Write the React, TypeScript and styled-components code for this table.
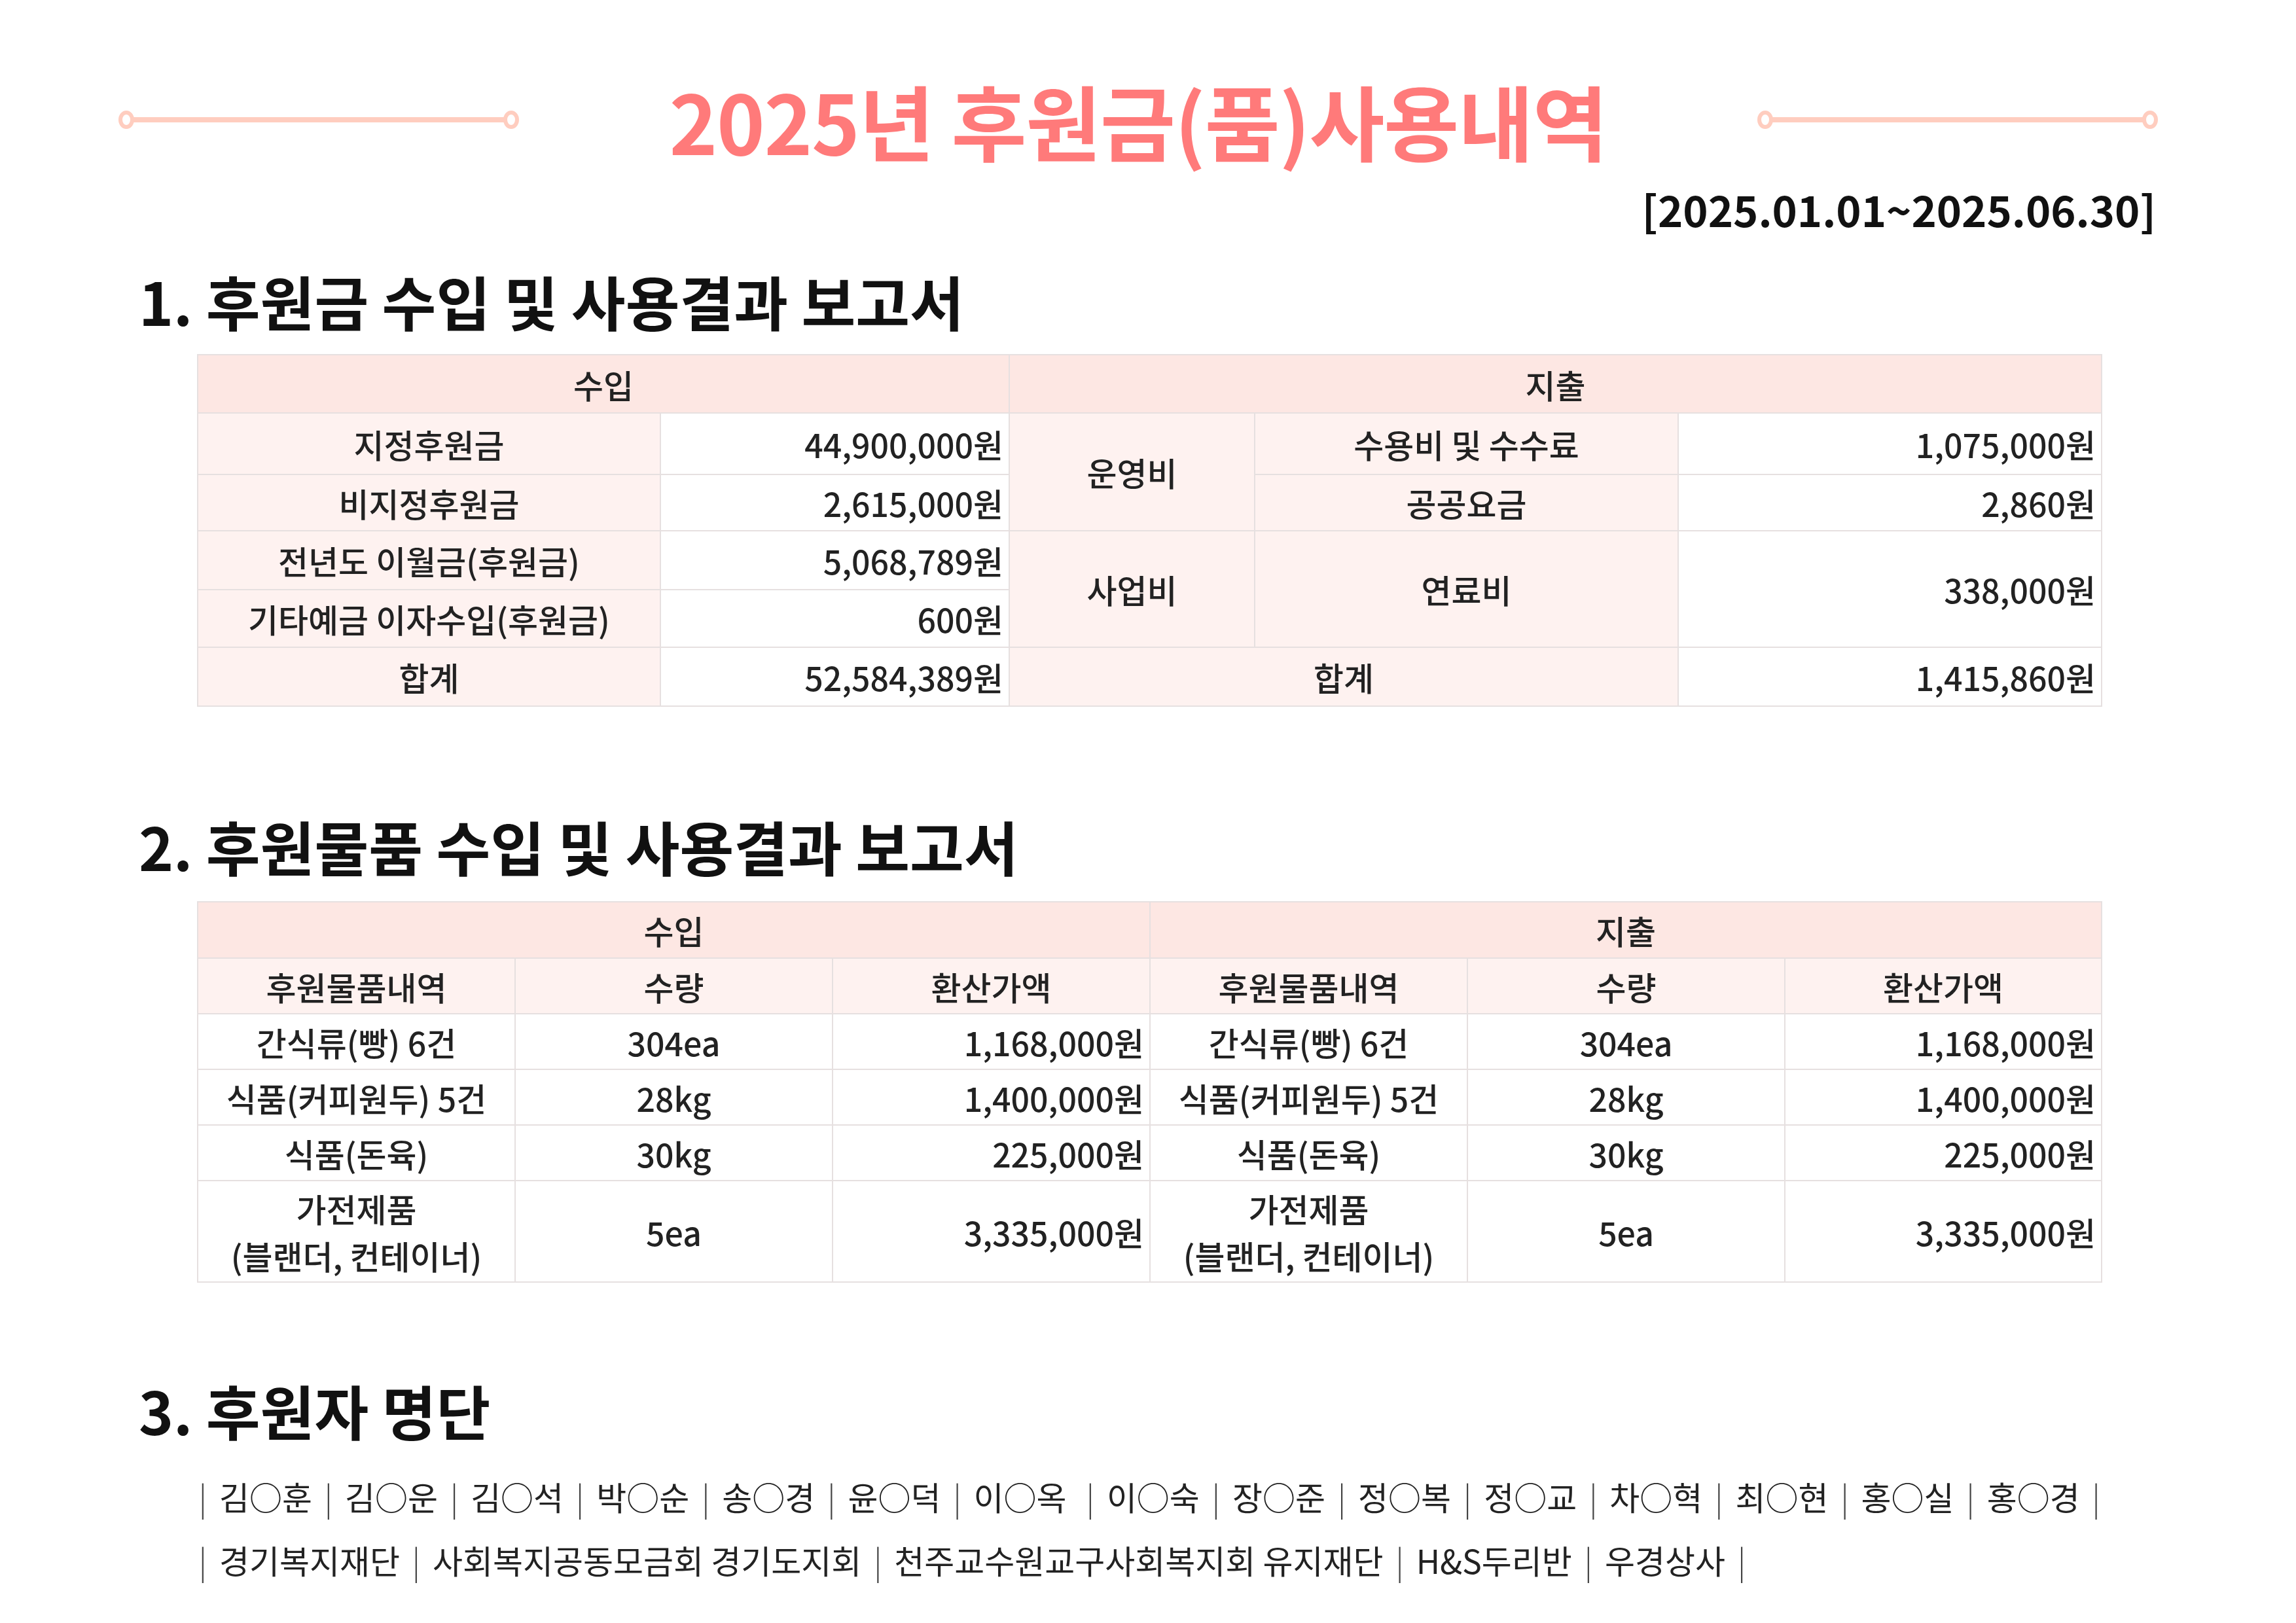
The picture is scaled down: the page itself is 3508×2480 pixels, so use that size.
import React from 'react';
import styled, { createGlobalStyle } from 'styled-components';

const GlobalStyle = createGlobalStyle`
  html, body {
    margin: 0;
    padding: 0;
    background: #ffffff;
  }
  body {
    font-family: "Noto Sans CJK KR", "Noto Sans", sans-serif;
    color: #222;
  }
`;

const Page = styled.div`
  width: 3508px;
  height: 2480px;
  box-sizing: border-box;
  padding-top: 108px;
  background: #fff;
  overflow: hidden;
`;

const TitleRow = styled.header`
  display: flex;
  align-items: center;
  justify-content: center;
  gap: 230px;
  padding-right: 30px;
`;

const Title = styled.h1`
  margin: 0;
  font-size: 125px;
  line-height: 150px;
  font-weight: 700;
  letter-spacing: -0.01em;
  color: #ff7a7a;
  white-space: nowrap;
`;

const Period = styled.div`
  margin-top: 21px;
  padding-right: 214px;
  text-align: right;
  font-size: 65px;
  line-height: 80px;
  font-weight: 700;
  color: #111;
`;

const Content = styled.main`
  padding-left: 212px;
`;

const SectionTitle = styled.h2<{ $top: number }>`
  margin: ${p => p.$top}px 0 0 0;
  font-size: 90px;
  line-height: 110px;
  font-weight: 700;
  color: #111;
  white-space: nowrap;
`;

const Table = styled.table<{ $top: number }>`
  margin: ${p => p.$top}px 0 0 89px;
  width: 2909px;
  border-collapse: collapse;
  table-layout: fixed;
  font-size: 50px;
  color: #222;
`;

const Col = styled.col<{ $w: number }>`
  width: ${p => p.$w}px;
`;

const Row = styled.tr<{ $h: number }>`
  height: ${p => p.$h}px;
`;

type Tone = 'head' | 'label' | 'plain';

const toneBg: Record<Tone, string> = {
  head: '#fde7e3',
  label: '#fef2f0',
  plain: '#ffffff',
};

const Cell = styled.td<{ $tone?: Tone; $right?: boolean }>`
  padding: 0 8px;
  border: 2px solid #e6e0e0;
  background: ${p => toneBg[p.$tone || 'plain']};
  text-align: ${p => (p.$right ? 'right' : 'center')};
  vertical-align: middle;
  font-weight: 500;
  line-height: 72px;
  white-space: nowrap;
`;

const NameList = styled.div`
  margin: 29px 0 0 84px;
  font-size: 50px;
  line-height: 97px;
  color: #222;
`;

const NameLine = styled.div`
  white-space: pre;
`;

const Sep = styled.span`
  margin: 0 7.5px;
  color: #444;
  font-weight: 300;
`;

const Ornament: React.FC = () => (
  <svg width="612" height="32" viewBox="0 0 612 32">
    <line x1="20" y1="16" x2="592" y2="16" stroke="#ffcdbf" strokeWidth="8" />
    <ellipse cx="12" cy="16" rx="9" ry="11" fill="#fff" stroke="#ffcdbf" strokeWidth="6" />
    <ellipse cx="600" cy="16" rx="9" ry="11" fill="#fff" stroke="#ffcdbf" strokeWidth="6" />
  </svg>
);

const people = [
  '김○훈', '김○운', '김○석', '박○순', '송○경', '윤○덕', '이○옥 ', '이○숙',
  '장○준', '정○복', '정○교', '차○혁', '최○현', '홍○실', '홍○경',
];

const groups = [
  '경기복지재단',
  '사회복지공동모금회 경기도지회',
  '천주교수원교구사회복지회 유지재단',
  'H&S두리반',
  '우경상사',
];

const Names: React.FC<{ items: string[] }> = ({ items }) => (
  <NameLine>
    <Sep>|</Sep>
    {items.map(item => (
      <React.Fragment key={item}>
        {' '}
        {item}
        {' '}
        <Sep>|</Sep>
      </React.Fragment>
    ))}
  </NameLine>
);

const goods = [
  { name: ['간식류(빵) 6건'], qty: '304ea', value: '1,168,000원', h: 85 },
  { name: ['식품(커피원두) 5건'], qty: '28kg', value: '1,400,000원', h: 85 },
  { name: ['식품(돈육)'], qty: '30kg', value: '225,000원', h: 85 },
  { name: ['가전제품', '(블랜더, 컨테이너)'], qty: '5ea', value: '3,335,000원', h: 155 },
];

const GoodsName: React.FC<{ lines: string[] }> = ({ lines }) => (
  <>
    {lines.map((line, i) => (
      <React.Fragment key={line}>
        {i > 0 && <br />}
        {line}
      </React.Fragment>
    ))}
  </>
);

const App: React.FC = () => {
  return (
    <>
      <GlobalStyle />
      <Page>
        <TitleRow>
          <Ornament />
          <Title>2025년 후원금(품)사용내역</Title>
          <Ornament />
        </TitleRow>
        <Period>[2025.01.01~2025.06.30]</Period>

        <Content>
          <SectionTitle $top={45}>1. 후원금 수입 및 사용결과 보고서</SectionTitle>
          <Table $top={27}>
            <colgroup>
              <Col $w={707} />
              <Col $w={533} />
              <Col $w={375} />
              <Col $w={647} />
              <Col $w={647} />
            </colgroup>
            <tbody>
              <Row $h={89}>
                <Cell $tone="head" colSpan={2}>수입</Cell>
                <Cell $tone="head" colSpan={3}>지출</Cell>
              </Row>
              <Row $h={94}>
                <Cell $tone="label">지정후원금</Cell>
                <Cell $right>44,900,000원</Cell>
                <Cell $tone="label" rowSpan={2}>운영비</Cell>
                <Cell $tone="label">수용비 및 수수료</Cell>
                <Cell $right>1,075,000원</Cell>
              </Row>
              <Row $h={86}>
                <Cell $tone="label">비지정후원금</Cell>
                <Cell $right>2,615,000원</Cell>
                <Cell $tone="label">공공요금</Cell>
                <Cell $right>2,860원</Cell>
              </Row>
              <Row $h={90}>
                <Cell $tone="label">전년도 이월금(후원금)</Cell>
                <Cell $right>5,068,789원</Cell>
                <Cell $tone="label" rowSpan={2}>사업비</Cell>
                <Cell $tone="label" rowSpan={2}>연료비</Cell>
                <Cell $right rowSpan={2}>338,000원</Cell>
              </Row>
              <Row $h={88}>
                <Cell $tone="label">기타예금 이자수입(후원금)</Cell>
                <Cell $right>600원</Cell>
              </Row>
              <Row $h={90}>
                <Cell $tone="label">합계</Cell>
                <Cell $right>52,584,389원</Cell>
                <Cell $tone="label" colSpan={2}>합계</Cell>
                <Cell $right>1,415,860원</Cell>
              </Row>
            </tbody>
          </Table>

          <SectionTitle $top={157}>2. 후원물품 수입 및 사용결과 보고서</SectionTitle>
          <Table $top={30}>
            <colgroup>
              <Col $w={485} />
              <Col $w={485} />
              <Col $w={485} />
              <Col $w={485} />
              <Col $w={485} />
              <Col $w={484} />
            </colgroup>
            <tbody>
              <Row $h={86}>
                <Cell $tone="head" colSpan={3}>수입</Cell>
                <Cell $tone="head" colSpan={3}>지출</Cell>
              </Row>
              <Row $h={85}>
                <Cell $tone="label">후원물품내역</Cell>
                <Cell $tone="label">수량</Cell>
                <Cell $tone="label">환산가액</Cell>
                <Cell $tone="label">후원물품내역</Cell>
                <Cell $tone="label">수량</Cell>
                <Cell $tone="label">환산가액</Cell>
              </Row>
              {goods.map(g => (
                <Row $h={g.h} key={g.value + g.qty}>
                  <Cell><GoodsName lines={g.name} /></Cell>
                  <Cell>{g.qty}</Cell>
                  <Cell $right>{g.value}</Cell>
                  <Cell><GoodsName lines={g.name} /></Cell>
                  <Cell>{g.qty}</Cell>
                  <Cell $right>{g.value}</Cell>
                </Row>
              ))}
            </tbody>
          </Table>

          <SectionTitle $top={139}>3. 후원자 명단</SectionTitle>
          <NameList>
            <Names items={people} />
            <Names items={groups} />
          </NameList>
        </Content>
      </Page>
    </>
  );
};

export default App;
